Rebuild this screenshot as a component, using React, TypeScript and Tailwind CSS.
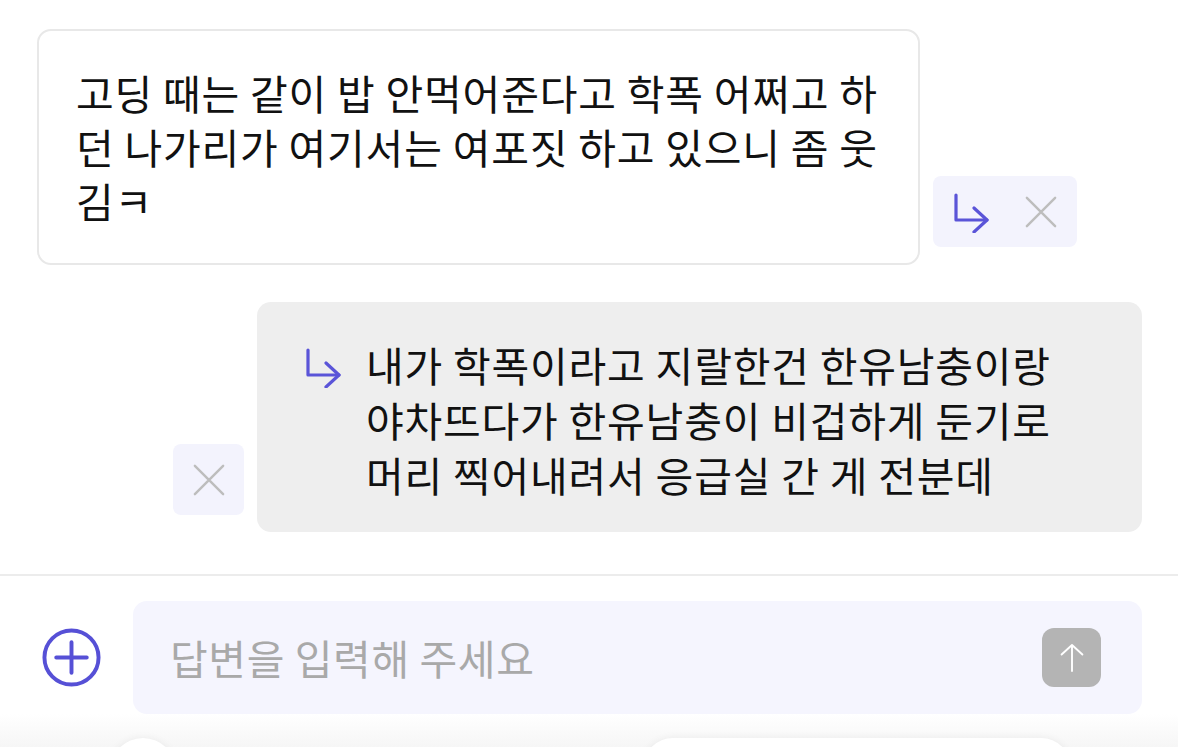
import { useState } from 'react';

// Reply thread — two quoted messages with reply / dismiss actions and a composer.

const FONT = { fontFamily: '"Noto Sans CJK KR", "Noto Sans", sans-serif' };

function ReplyArrow({ className = '' }: { className?: string }) {
  return (
    <svg viewBox="0 0 36 40" className={className} fill="none" stroke="currentColor" strokeWidth={3.2} strokeLinecap="round" strokeLinejoin="round">
      <path d="M2 2 V27 H33" />
      <path d="M20 15 L33 27 L20 39" />
    </svg>
  );
}

function CloseIcon({ className = '' }: { className?: string }) {
  return (
    <svg viewBox="0 0 34 34" className={className} fill="none" stroke="currentColor" strokeWidth={2.6} strokeLinecap="round">
      <path d="M2 2 L32 32 M32 2 L2 32" />
    </svg>
  );
}

export default function App() {
  const [text, setText] = useState('');

  return (
    <div className="w-[1178px] h-[747px] overflow-hidden bg-white flex flex-col" style={FONT}>
      {/* ── Messages ─────────────────────────────────────────────── */}
      <div className="h-[574px] shrink-0 pt-[29px] flex flex-col gap-[37px]">
        <div className="flex items-end gap-[13px] pl-[37px]">
          <div className="w-[883px] rounded-[14px] border-2 border-[#e8e8e8] bg-white pl-[37px] pr-[20px] pt-[34px] pb-[36px] text-[41px] tracking-[0.8px] leading-[54px] text-[#111] whitespace-nowrap">
            고딩 때는 같이 밥 안먹어준다고 학폭 어쩌고 하<br />
            던 나가리가 여기서는 여포짓 하고 있으니 좀 웃<br />
            김ㅋ
          </div>
          <div className="mb-[18px] w-[144px] h-[71px] rounded-[8px] bg-[#f3f3fd] flex items-center pl-[21px] pr-[20px] justify-between">
            <ReplyArrow className="w-[36px] h-[40px] text-[#5a54d8] mt-[2px]" />
            <CloseIcon className="w-[32px] h-[32px] text-[#bdbdbd]" />
          </div>
        </div>

        <div className="flex items-end justify-end gap-[13px] pr-[36px]">
          <div className="mb-[17px] w-[71px] h-[71px] rounded-[8px] bg-[#f3f3fd] flex items-center justify-center">
            <CloseIcon className="w-[32px] h-[32px] text-[#bdbdbd]" />
          </div>
          <div className="w-[885px] rounded-[14px] bg-[#eeeeee] pl-[49px] pr-[40px] pt-[35px] pb-[30px] flex gap-[24px]">
            <ReplyArrow className="w-[36px] h-[40px] shrink-0 mt-[11px] text-[#5a54d8]" />
            <div className="text-[41px] tracking-[0.8px] leading-[55px] text-[#111] whitespace-nowrap">
              내가 학폭이라고 지랄한건 한유남충이랑<br />
              야차뜨다가 한유남충이 비겁하게 둔기로<br />
              머리 찍어내려서 응급실 간 게 전분데
            </div>
          </div>
        </div>
      </div>

      {/* ── Composer ─────────────────────────────────────────────── */}
      <div className="shrink-0 border-t-2 border-[#ececec] pt-[25px] flex items-center pl-[41px] pr-[36px] gap-[31px]">
        <button className="shrink-0 w-[61px] h-[61px] flex items-center justify-center text-[#5650d6]">
          <svg viewBox="0 0 62 62" className="w-[61px] h-[61px]" fill="none" stroke="currentColor" strokeWidth={4} strokeLinecap="round">
            <circle cx="31" cy="31" r="27.5" />
            <path d="M15.5 31 H46.5 M31 15.5 V46.5" />
          </svg>
        </button>
        <div className="flex-1 h-[113px] rounded-[14px] bg-[#f5f5fe] flex items-center pl-[37px] pr-[41px]">
          <input
            value={text}
            onChange={(e) => setText(e.target.value)}
            placeholder="답변을 입력해 주세요"
            className="flex-1 bg-transparent outline-none text-[41px] tracking-[0.6px] text-[#111] placeholder:text-[#a9a9a9]"
            style={FONT}
          />
          <button className="w-[59px] h-[59px] rounded-[12px] bg-[#b4b4b4] flex items-center justify-center">
            <svg viewBox="0 0 30 34" className="w-[26px] h-[32px]" fill="none" stroke="white" strokeWidth={2.2} strokeLinecap="round" strokeLinejoin="round">
              <path d="M15 2 V32 M3 13 L15 2 L27 13" />
            </svg>
          </button>
        </div>
      </div>

      {/* ── Tab bar peeking in ───────────────────────────────────── */}
      <div className="flex-1 min-h-0 bg-gradient-to-b from-white to-[#f6f6f6] flex items-start pt-[24px]">
        <div className="ml-[110px] w-[66px] h-[66px] shrink-0 rounded-full bg-white shadow-[0_0_8px_rgba(0,0,0,0.06)]" />
        <div className="ml-[467px] w-[428px] h-[60px] shrink-0 rounded-[30px] bg-white shadow-[0_0_8px_rgba(0,0,0,0.06)]" />
      </div>
    </div>
  );
}
